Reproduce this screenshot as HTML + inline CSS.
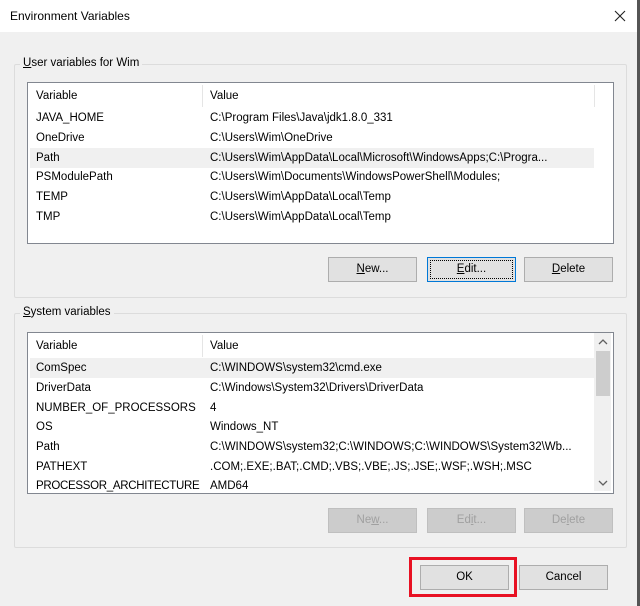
<!DOCTYPE html>
<html><head><style>
body{margin:0;width:640px;height:606px;background:#f0f0f0;font-family:"Liberation Sans",sans-serif;font-size:11.5px;color:#000;position:relative;overflow:hidden}
.a{position:absolute}
.title{left:0;top:0;width:637px;height:32px;background:#fff}
.grp{border:1px solid #dcdcdc;border-radius:2px}
.lbl{background:#f0f0f0;padding:0 3px}
.list{background:#fff;border:1px solid #828790}
.row{position:absolute;left:2px;height:20px;line-height:20px;white-space:nowrap}
.row span{position:absolute}
.btn{background:#e1e1e1;border:1px solid #adadad;text-align:center;line-height:22px;box-sizing:border-box}
.dis{color:#a0a0a0;background:#cccccc;border-color:#bfbfbf}
</style></head><body>
<div class="a title"></div>
<div class="a" style="left:10px;top:9px;font-size:12px">Environment Variables</div>
<svg class="a" style="left:614px;top:10px" width="12" height="12"><path d="M1 1L11 11M11 1L1 11" stroke="#222" stroke-width="1.1"/></svg>
<div class="a" style="left:637px;top:0;width:3px;height:606px;background:#555"></div>

<div class="a grp" style="left:14px;top:64px;width:611px;height:232px"></div>
<div class="a lbl" style="left:20px;top:57px"><u>U</u>ser variables for Wim</div>
<div class="a list" style="left:27px;top:82px;width:585px;height:160px">
 <div class="a" style="left:174px;top:2px;width:1px;height:22px;background:#e5e5e5"></div>
 <div class="a" style="left:566px;top:2px;width:1px;height:22px;background:#e5e5e5"></div>
 <div class="row" style="top:3px"><span style="left:6px">Variable</span><span style="left:180px">Value</span></div>
 <div class="row" style="top:25px"><span style="left:6px">JAVA_HOME</span><span style="left:180px">C:\Program Files\Java\jdk1.8.0_331</span></div>
 <div class="row" style="top:45px"><span style="left:6px">OneDrive</span><span style="left:180px">C:\Users\Wim\OneDrive</span></div>
 <div class="row" style="top:65px;width:564px;background:#f0f0f0"><span style="left:6px">Path</span><span style="left:180px">C:\Users\Wim\AppData\Local\Microsoft\WindowsApps;C:\Progra...</span></div>
 <div class="row" style="top:84px"><span style="left:6px">PSModulePath</span><span style="left:180px">C:\Users\Wim\Documents\WindowsPowerShell\Modules;</span></div>
 <div class="row" style="top:104px"><span style="left:6px">TEMP</span><span style="left:180px">C:\Users\Wim\AppData\Local\Temp</span></div>
 <div class="row" style="top:124px"><span style="left:6px">TMP</span><span style="left:180px">C:\Users\Wim\AppData\Local\Temp</span></div>
</div>
<div class="a btn" style="left:328px;top:257px;width:89px;height:25px"><u>N</u>ew...</div>
<div class="a btn" style="left:427px;top:257px;width:89px;height:25px;border:1px solid #0078d7;outline:1px dotted #000;outline-offset:-4px"><u>E</u>dit...</div>
<div class="a btn" style="left:524px;top:257px;width:89px;height:25px"><u>D</u>elete</div>

<div class="a grp" style="left:14px;top:313px;width:611px;height:233px"></div>
<div class="a lbl" style="left:20px;top:306px"><u>S</u>ystem variables</div>
<div class="a list" style="left:27px;top:332px;width:585px;height:160px;overflow:hidden">
 <div class="a" style="left:174px;top:2px;width:1px;height:22px;background:#e5e5e5"></div>
 <div class="a" style="left:566px;top:0;width:17px;height:158px;background:#f0f0f0"></div>
 <div class="a" style="left:568px;top:18px;width:14px;height:45px;background:#cdcdcd"></div>
 <svg class="a" style="left:570px;top:5px" width="10" height="8"><path d="M1 6L5 2L9 6" stroke="#606060" fill="none" stroke-width="1.3"/></svg>
 <svg class="a" style="left:570px;top:146px" width="10" height="8"><path d="M1 2L5 6L9 2" stroke="#606060" fill="none" stroke-width="1.3"/></svg>
 <div class="row" style="top:3px"><span style="left:6px">Variable</span><span style="left:180px">Value</span></div>
 <div class="row" style="top:25px;width:564px;background:#f0f0f0"><span style="left:6px">ComSpec</span><span style="left:180px">C:\WINDOWS\system32\cmd.exe</span></div>
 <div class="row" style="top:45px"><span style="left:6px">DriverData</span><span style="left:180px">C:\Windows\System32\Drivers\DriverData</span></div>
 <div class="row" style="top:65px"><span style="left:6px">NUMBER_OF_PROCESSORS</span><span style="left:180px">4</span></div>
 <div class="row" style="top:84px"><span style="left:6px">OS</span><span style="left:180px">Windows_NT</span></div>
 <div class="row" style="top:104px"><span style="left:6px">Path</span><span style="left:180px">C:\WINDOWS\system32;C:\WINDOWS;C:\WINDOWS\System32\Wb...</span></div>
 <div class="row" style="top:124px"><span style="left:6px">PATHEXT</span><span style="left:180px">.COM;.EXE;.BAT;.CMD;.VBS;.VBE;.JS;.JSE;.WSF;.WSH;.MSC</span></div>
 <div class="row" style="top:143px"><span style="left:6px;letter-spacing:-0.3px">PROCESSOR_ARCHITECTURE</span><span style="left:180px">AMD64</span></div>
</div>
<div class="a btn dis" style="left:328px;top:508px;width:89px;height:25px">Ne<u>w</u>...</div>
<div class="a btn dis" style="left:427px;top:508px;width:89px;height:25px">Ed<u>i</u>t...</div>
<div class="a btn dis" style="left:524px;top:508px;width:89px;height:25px">De<u>l</u>ete</div>

<div class="a" style="left:409px;top:557px;width:102px;height:34px;border:3px solid #e81123"></div>
<div class="a btn" style="left:420px;top:565px;width:89px;height:25px">OK</div>
<div class="a btn" style="left:519px;top:565px;width:89px;height:25px">Cancel</div>
</body></html>
